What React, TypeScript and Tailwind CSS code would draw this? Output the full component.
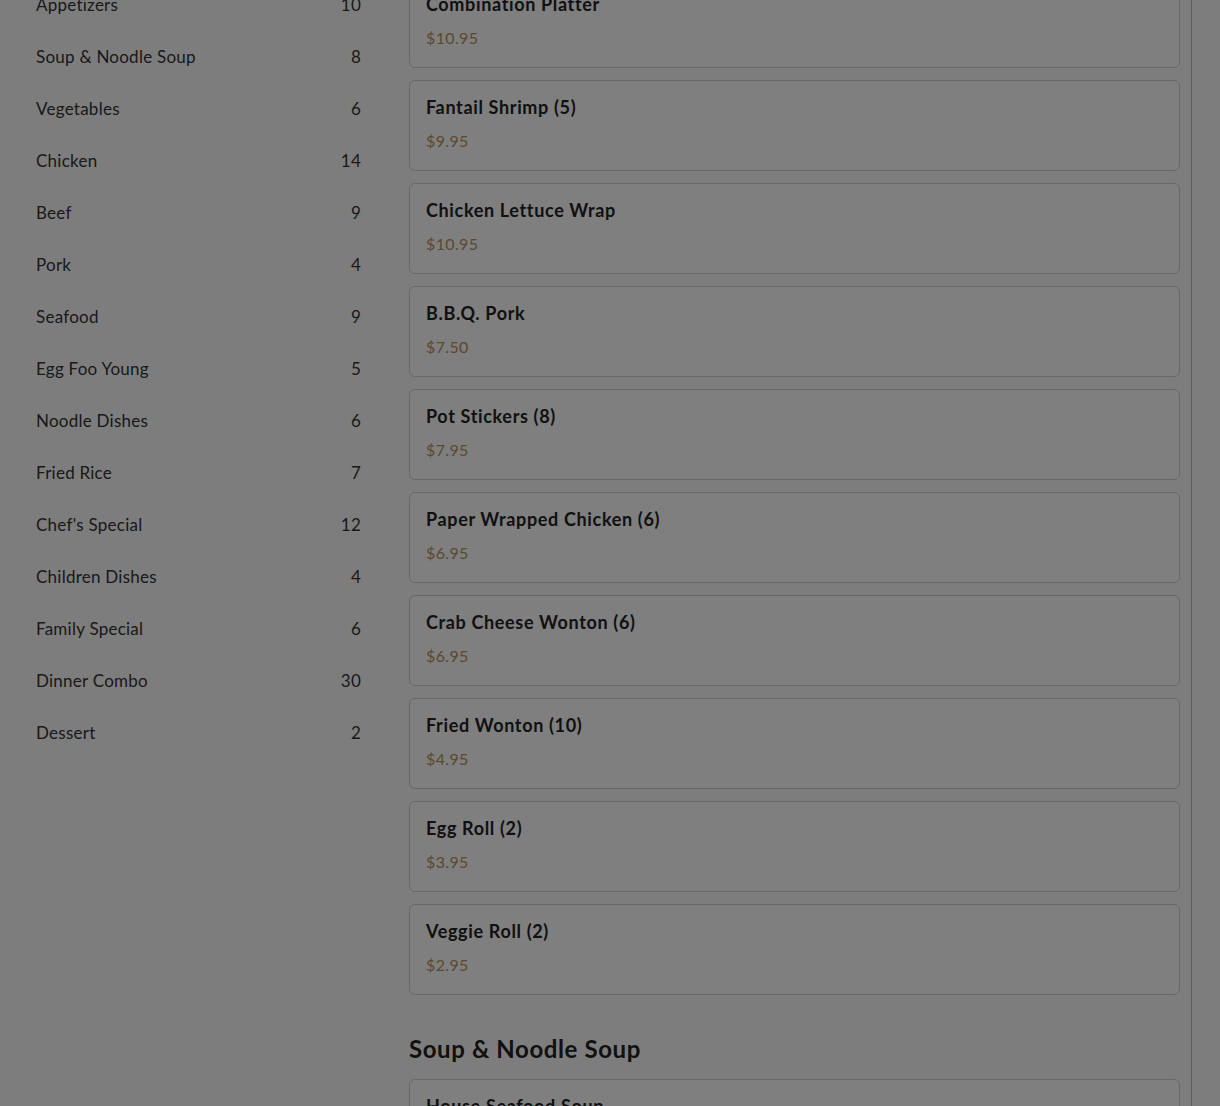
const categories: [string, number][] = [
  ["Appetizers", 10],
  ["Soup & Noodle Soup", 8],
  ["Vegetables", 6],
  ["Chicken", 14],
  ["Beef", 9],
  ["Pork", 4],
  ["Seafood", 9],
  ["Egg Foo Young", 5],
  ["Noodle Dishes", 6],
  ["Fried Rice", 7],
  ["Chef's Special", 12],
  ["Children Dishes", 4],
  ["Family Special", 6],
  ["Dinner Combo", 30],
  ["Dessert", 2],
];

const sections: { title: string; items: [string, string][] }[] = [
  {
    title: "Appetizers",
    items: [
      ["Combination Platter", "$10.95"],
      ["Fantail Shrimp (5)", "$9.95"],
      ["Chicken Lettuce Wrap", "$10.95"],
      ["B.B.Q. Pork", "$7.50"],
      ["Pot Stickers (8)", "$7.95"],
      ["Paper Wrapped Chicken (6)", "$6.95"],
      ["Crab Cheese Wonton (6)", "$6.95"],
      ["Fried Wonton (10)", "$4.95"],
      ["Egg Roll (2)", "$3.95"],
      ["Veggie Roll (2)", "$2.95"],
    ],
  },
  {
    title: "Soup & Noodle Soup",
    items: [
      ["House Seafood Soup", "$12.95"],
      ["Wonton Soup", "$8.95"],
    ],
  },
];

const MenuCard = ({ name, price }: { name: string; price: string }) => (
  <div className="border border-[#cfcfcf] rounded-md bg-white px-4 pt-3 pb-[17px]">
    <div className="text-[18px] leading-7 font-bold tracking-[0.65px] text-[#222]">{name}</div>
    <div className="mt-2 text-[16px] leading-6 tracking-[0.35px] text-[#b8925a]">{price}</div>
  </div>
);

export default function App() {
  return (
    <div
      className="relative h-[1106px] overflow-hidden bg-[#fbfbfb]"
      style={{ fontFamily: "Lato, 'Noto Sans', sans-serif" }}
    >
      <div className="flex mt-[-69px]">
        {/* category sidebar */}
        <aside className="w-[397px] shrink-0 px-9 pt-[48px]">
          {categories.map(([name, count]) => (
            <div key={name} className="h-[52px] flex items-center justify-between text-[17px] tracking-[0.25px] text-[#333]">
              <span>{name}</span>
              <span>{count}</span>
            </div>
          ))}
        </aside>

        {/* menu list */}
        <main className="w-[795px] shrink-0 pl-3 pr-[11px] border-r border-[#b6b6b6]">
          {sections.map((s, i) => (
            <section key={s.title} className={i > 0 ? "mt-[38px]" : ""}>
              <h2 className="text-[24px] leading-8 font-bold tracking-[0.6px] text-[#222] mb-[14px]">{s.title}</h2>
              <div className="flex flex-col gap-3">
                {s.items.map(([n, p]) => (
                  <MenuCard key={n} name={n} price={p} />
                ))}
              </div>
            </section>
          ))}
        </main>
      </div>

      {/* modal backdrop */}
      <div className="fixed inset-0 bg-black/50" />
    </div>
  );
}
